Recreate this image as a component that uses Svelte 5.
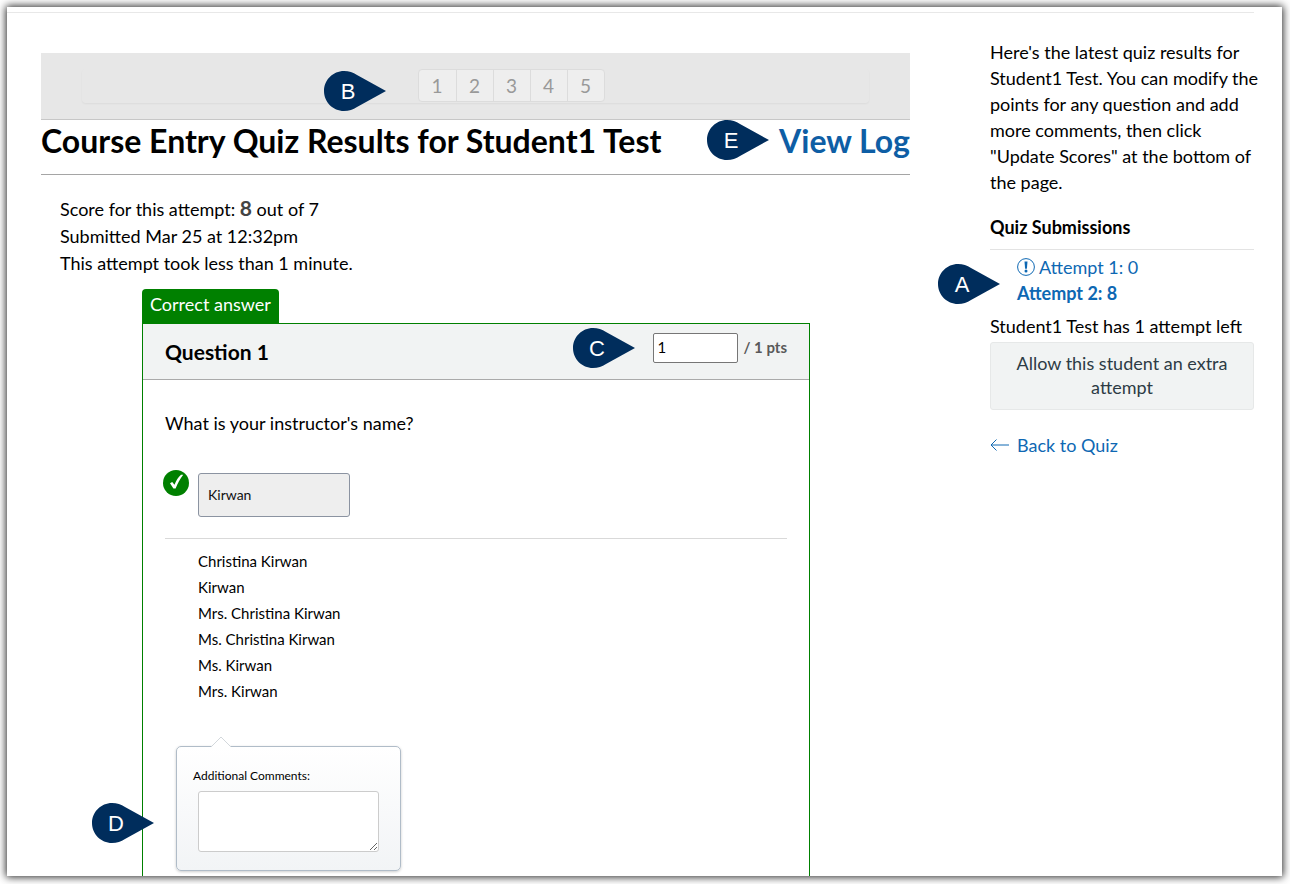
<script lang="ts">
  let score = $state('1');
  let comment = $state('');

  const pages = [1, 2, 3, 4, 5];
  const answers = [
    'Christina Kirwan',
    'Kirwan',
    'Mrs. Christina Kirwan',
    'Ms. Christina Kirwan',
    'Ms. Kirwan',
    'Mrs. Kirwan'
  ];
</script>

{#snippet marker(letter: string)}
  <svg class="marker marker-{letter.toLowerCase()}" width="62" height="40" viewBox="0 0 62 40">
    <path d="M20 0C9 0 0 9 0 20s9 20 20 20c5 0 9-1.500 13-4L62 20 33 4C29 1.500 25 0 20 0z" fill="#002d5c" />
    <text x="24" y="28" text-anchor="middle" fill="#fff">{letter}</text>
  </svg>
{/snippet}

<div class="frame">
  <div class="top-line"></div>
  <div class="columns">
    <main>
      <nav class="pager-bar">
        <div class="pager">
          <div class="pages">
            {@render marker('B')}
            {#each pages as p}
              <button>{p}</button>
            {/each}
          </div>
        </div>
      </nav>

      <header class="title">
        <h1>Course Entry Quiz Results for Student1 Test</h1>
        <a class="log" href="#log">{@render marker('E')}View Log</a>
      </header>

      <div class="summary">
        <p>Score for this attempt: <strong>8</strong> out of 7</p>
        <p>Submitted Mar 25 at 12:32pm</p>
        <p>This attempt took less than 1 minute.</p>
      </div>

      <section class="question-wrap">
        <div class="tab">Correct answer</div>
        <div class="question">
          <div class="question-head">
            <h2>Question 1</h2>
            <div class="points">
              {@render marker('C')}
              <input id="score" bind:value={score} />
              <label for="score">/ 1 pts</label>
            </div>
          </div>
          <div class="question-body">
            <p class="prompt">What is your instructor's name?</p>
            <div class="given">
              <svg class="check" width="26" height="26" viewBox="0 0 26 26">
                <circle cx="13" cy="13" r="13" fill="#008000" />
                <path d="M7 13.200l2.200-1.300 2.300 2.900C13.200 10.500 15.200 7.400 18 4.800h2.200C17 9 14.700 13.500 12.600 18.500h-2.200z" fill="#fff" />
              </svg>
              <input class="answer" value="Kirwan" aria-label="Student answer" readonly />
            </div>
            <ul>
              {#each answers as a}
                <li>{a}</li>
              {/each}
            </ul>
            <div class="comments">
              <svg class="notch" width="22" height="12" viewBox="0 0 22 12">
                <path d="M0 12L11 1l11 11z" fill="#fff" />
                <path d="M1 11L11 1l10 10" fill="none" stroke="#d3d8dc" />
              </svg>
              {@render marker('D')}
              <label for="comment">Additional Comments:</label>
              <textarea id="comment" bind:value={comment}></textarea>
            </div>
          </div>
        </div>
      </section>
    </main>

    <aside>
      <p class="intro">
        Here's the latest quiz results for Student1 Test. You can modify the points for any
        question and add more comments, then click "Update Scores" at the bottom of the page.
      </p>
      <h3>Quiz Submissions</h3>
      <div class="attempts">
        {@render marker('A')}
        <a href="#attempt1">
          <svg width="18" height="18" viewBox="0 0 18 18">
            <circle cx="9" cy="9" r="8.400" fill="none" stroke="#0e68b3" />
            <path d="M7.500 3.500h3l-.6 7.200H8.100z" fill="#0e68b3" />
            <circle cx="9" cy="13" r="1.500" fill="#0e68b3" />
          </svg>
          Attempt 1: 0
        </a>
        <a class="current" href="#attempt2">Attempt 2: 8</a>
      </div>
      <p class="left">Student1 Test has 1 attempt left</p>
      <button class="extra">Allow this student an extra attempt</button>
      <a class="back" href="#quiz">
        <svg width="19" height="12" viewBox="0 0 19 12">
          <path d="M19 6H1M6.500.5L1 6l5.500 5.500" fill="none" stroke="#0e68b3" />
        </svg>
        Back to Quiz
      </a>
    </aside>
  </div>
</div>

<style>
  :global(body) {
    background: #fff;
  }
  .frame {
    margin: 7px 8px 8px 7px;
    min-height: calc(100vh - 15px);
    box-sizing: border-box;
    overflow: hidden;
    background: #fff;
    box-shadow: 0 0 8px 1px rgba(0, 0, 0, 0.85);
    font-family: Lato, sans-serif;
    font-size: 18px;
    line-height: 26px;
    color: #000;
  }
  .top-line {
    margin: 5px 28px 0 0;
    border-top: 1px solid #e8e8e8;
  }
  .columns {
    display: flex;
    gap: 80px;
    padding: 0 28px 0 34px;
  }
  main {
    flex: 1;
    min-width: 0;
    padding-top: 40px;
  }
  aside {
    width: 264px;
    padding-top: 26px;
  }
  h1, h2, h3, p, ul {
    margin: 0;
    padding: 0;
  }
  a {
    color: #0e68b3;
    text-decoration: none;
  }
  input, textarea, button {
    box-sizing: border-box;
    font-family: inherit;
  }

  .marker {
    position: absolute;
  }
  .marker text {
    font: 22px "Liberation Sans", Arial, sans-serif;
  }
  .marker-a { left: -52px; top: 14px; }
  .marker-b { left: -95px; top: 1px; }
  .marker-c { left: -80px; top: -5px; }
  .marker-d { left: -85px; top: 56px; }
  .marker-e { left: -72px; top: 0; }

  .pager-bar {
    padding: 16px 41px;
    background: #e7e7e7;
    border-bottom: 1px solid #c7c7c7;
  }
  .pager {
    display: flex;
    justify-content: center;
    padding: 0 0 1px 71px;
    border-radius: 4px;
    box-shadow: 0 1px 2px rgba(0, 0, 0, 0.05);
  }
  .pages {
    position: relative;
    display: flex;
    background: #eee;
    border: 1px solid #dcdcdc;
    border-radius: 4px;
  }
  .pages button {
    width: 37px;
    height: 31px;
    padding: 0;
    background: none;
    border: none;
    font-size: 19px;
    color: #999;
  }
  .pages button + button {
    border-left: 1px solid #dcdcdc;
  }

  .title {
    display: flex;
    justify-content: space-between;
    padding: 0 0 12px;
    border-bottom: 1px solid #a5a5a5;
    font-size: 32px;
    font-weight: 700;
    line-height: 42px;
  }
  h1 {
    font-size: inherit;
  }
  .log {
    position: relative;
    color: #0e5ea5;
  }

  .summary {
    padding: 21px 19px 0;
    line-height: 27px;
  }
  .summary strong {
    font-size: 21px;
    line-height: 20px;
    color: #444;
  }

  .question-wrap {
    margin: 12px 100px 0 101px;
  }
  .tab {
    width: max-content;
    padding: 2px 8px 6px;
    background: #008000;
    border-radius: 4px 4px 0 0;
    color: #fff;
  }
  .question {
    border: 1px solid #008000;
    border-bottom: none;
  }
  .question-head {
    display: flex;
    justify-content: space-between;
    align-items: flex-start;
    padding: 9px 22px 15px;
    background: #f1f3f3;
    border-bottom: 1px solid #aaa;
  }
  h2 {
    padding-top: 7px;
    font-size: 21px;
    line-height: 24px;
  }
  .points {
    position: relative;
    display: flex;
    align-items: center;
    gap: 5px;
  }
  .points input {
    width: 85px;
    height: 30px;
    padding: 0 3px 3px;
    border: 1px solid #767676;
    border-radius: 2px;
    font-size: 15px;
  }
  .points label {
    padding-bottom: 3px;
    font-size: 15px;
    font-weight: 700;
    color: #595959;
  }
  .question-body {
    padding: 30px 22px 5px;
  }
  .given {
    display: flex;
    gap: 9px;
    margin-left: -2px;
    padding: 34px 0 21px;
  }
  .answer {
    width: 152px;
    height: 44px;
    margin-top: 3px;
    padding: 0 9px 2px;
    background: #eee;
    border: 1px solid #8b93a1;
    border-radius: 3px;
    font-size: 14px;
    color: #111;
  }
  ul {
    padding: 9px 33px 0;
    border-top: 1px solid #d9d9d9;
    list-style: none;
    font-size: 15px;
  }
  .comments {
    position: relative;
    display: flex;
    flex-direction: column;
    box-sizing: border-box;
    width: 225px;
    margin: 42px 0 0 11px;
    padding: 19px 21px 18px;
    background: linear-gradient(#fff, #f2f4f6);
    border: 1px solid #b0bcc8;
    border-radius: 5px;
    box-shadow: 0 1px 3px rgba(0, 0, 0, 0.2);
  }
  .notch {
    position: absolute;
    left: 33px;
    top: -11px;
  }
  .comments label {
    margin-left: -5px;
    font-size: 12px;
    line-height: 20px;
  }
  .comments textarea {
    height: 61px;
    margin-top: 5px;
    background: #fff;
    border: 1px solid #ccc;
    border-radius: 3px;
    resize: vertical;
  }

  .intro {
    margin-right: -6px;
  }
  h3 {
    margin-top: 19px;
    padding-bottom: 9px;
    border-bottom: 1px solid #e3e3e3;
    font-size: 18px;
  }
  .attempts {
    position: relative;
    padding: 4px 0 0 27px;
  }
  .attempts a {
    display: flex;
    align-items: center;
    gap: 4px;
  }
  .attempts .current {
    font-weight: 700;
  }
  .left {
    margin-top: 7px;
  }
  .extra {
    width: 100%;
    margin-top: 3px;
    padding: 8px 20px 10px;
    background: #f1f3f3;
    border: 1px solid #e6e8e8;
    border-radius: 3px;
    font-size: 18px;
    line-height: 24px;
    color: #2d3b45;
  }
  .back {
    display: flex;
    align-items: center;
    gap: 8px;
    margin-top: 22px;
  }
</style>
